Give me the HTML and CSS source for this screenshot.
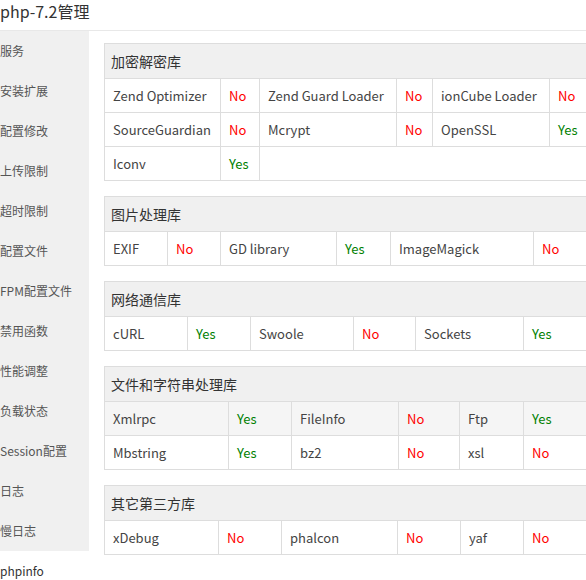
FILE: index.html
```html
<!DOCTYPE html>
<html lang="zh-CN">
<head>
    <meta charset="UTF-8">
    <meta name="viewport" content="width=device-width, initial-scale=1.0">
    <title>php-7.2管理</title>
    <link rel="stylesheet" href="styles.css">
</head>
<body>

    <div class="title">php-7.2管理</div>

    <div class="page">
        <ul class="menu">
            <li>服务</li>
            <li>安装扩展</li>
            <li>配置修改</li>
            <li>上传限制</li>
            <li>超时限制</li>
            <li>配置文件</li>
            <li>FPM配置文件</li>
            <li>禁用函数</li>
            <li>性能调整</li>
            <li>负载状态</li>
            <li>Session配置</li>
            <li>日志</li>
            <li>慢日志</li>
            <li class="active">phpinfo</li>
        </ul>

        <div class="content">
            <table class="lib-table crypt">
                <colgroup><col><col><col><col><col><col></colgroup>
                <tr><th colspan="6">加密解密库</th></tr>
                <tr>
                    <td>Zend Optimizer</td><td class="no">No</td>
                    <td>Zend Guard Loader</td><td class="no">No</td>
                    <td>ionCube Loader</td><td class="no">No</td>
                </tr>
                <tr>
                    <td>SourceGuardian</td><td class="no">No</td>
                    <td>Mcrypt</td><td class="no">No</td>
                    <td>OpenSSL</td><td class="yes">Yes</td>
                </tr>
                <tr>
                    <td>Iconv</td><td class="yes">Yes</td>
                </tr>
            </table>

            <table class="lib-table image">
                <colgroup><col><col><col><col><col><col></colgroup>
                <tr><th colspan="6">图片处理库</th></tr>
                <tr>
                    <td>EXIF</td><td class="no">No</td>
                    <td>GD library</td><td class="yes">Yes</td>
                    <td>ImageMagick</td><td class="no">No</td>
                </tr>
            </table>

            <table class="lib-table net">
                <colgroup><col><col><col><col><col><col></colgroup>
                <tr><th colspan="6">网络通信库</th></tr>
                <tr>
                    <td>cURL</td><td class="yes">Yes</td>
                    <td>Swoole</td><td class="no">No</td>
                    <td>Sockets</td><td class="yes">Yes</td>
                </tr>
            </table>

            <table class="lib-table string">
                <colgroup><col><col><col><col><col><col></colgroup>
                <tr><th colspan="6">文件和字符串处理库</th></tr>
                <tr class="hover">
                    <td>Xmlrpc</td><td class="yes">Yes</td>
                    <td>FileInfo</td><td class="no">No</td>
                    <td>Ftp</td><td class="yes">Yes</td>
                </tr>
                <tr>
                    <td>Mbstring</td><td class="yes">Yes</td>
                    <td>bz2</td><td class="no">No</td>
                    <td>xsl</td><td class="no">No</td>
                </tr>
            </table>

            <table class="lib-table other">
                <colgroup><col><col><col><col><col><col></colgroup>
                <tr><th colspan="6">其它第三方库</th></tr>
                <tr>
                    <td>xDebug</td><td class="no">No</td>
                    <td>phalcon</td><td class="no">No</td>
                    <td>yaf</td><td class="no">No</td>
                </tr>
            </table>
        </div>
    </div>

</body>
</html>
```

FILE: styles.css
```css
body {
    margin: 0;
    overflow: hidden;
    font-family: "Noto Sans CJK SC", sans-serif;
    color: #444;
    background-color: #fff;
}
.title {
    height: 30px;
    line-height: 23px;
    font-size: 16px;
    color: #333;
    border-bottom: 1px solid #e8e8e8;
}
.page {
    display: flex;
}
.menu {
    flex: none;
    width: 89px;
    margin: 0;
    padding: 0;
    list-style: none;
}
.menu li {
    height: 40px;
    line-height: 40px;
    font-size: 12px;
    color: #555;
    white-space: nowrap;
    background-color: #f0f0f0;
}
.menu li.active {
    background-color: #fff;
    color: #333;
}
.content {
    flex: none;
    padding: 12px 0 0 15px;
}
.lib-table {
    table-layout: fixed;
    border-collapse: collapse;
    border: 1px solid #ddd;
    margin-bottom: 15px;
    font-size: 13px;
}
.lib-table th,
.lib-table td {
    border: 1px solid #ddd;
    white-space: nowrap;
    overflow: hidden;
}
.lib-table th {
    height: 34px;
    padding: 0 6px;
    text-align: left;
    font-size: 14px;
    font-weight: normal;
    color: #333;
    background-color: #f0f0f0;
}
.lib-table td {
    height: 33px;
    padding: 0 8px;
}
.lib-table tr.hover td {
    background-color: #f5f5f5;
}
.lib-table .yes {
    color: #008000;
}
.lib-table .no {
    color: #ff0000;
}

/* column widths per table */
.crypt { width: 525px; }
.crypt col:nth-child(1) { width: 116px; }
.crypt col:nth-child(2) { width: 39px; }
.crypt col:nth-child(3) { width: 137px; }
.crypt col:nth-child(4) { width: 36px; }
.crypt col:nth-child(5) { width: 117px; }
.crypt col:nth-child(6) { width: 80px; }

.image { width: 509px; }
.image col:nth-child(1) { width: 63px; }
.image col:nth-child(2) { width: 53px; }
.image col:nth-child(3) { width: 116px; }
.image col:nth-child(4) { width: 54px; }
.image col:nth-child(5) { width: 143px; }
.image col:nth-child(6) { width: 80px; }

.net { width: 499px; }
.net col:nth-child(1) { width: 83px; }
.net col:nth-child(2) { width: 63px; }
.net col:nth-child(3) { width: 103px; }
.net col:nth-child(4) { width: 62px; }
.net col:nth-child(5) { width: 108px; }
.net col:nth-child(6) { width: 80px; }

.string { width: 499px; }
.string col:nth-child(1) { width: 124px; }
.string col:nth-child(2) { width: 63px; }
.string col:nth-child(3) { width: 107px; }
.string col:nth-child(4) { width: 61px; }
.string col:nth-child(5) { width: 64px; }
.string col:nth-child(6) { width: 80px; }

.other { width: 499px; }
.other col:nth-child(1) { width: 114px; }
.other col:nth-child(2) { width: 63px; }
.other col:nth-child(3) { width: 116px; }
.other col:nth-child(4) { width: 63px; }
.other col:nth-child(5) { width: 63px; }
.other col:nth-child(6) { width: 80px; }
```
